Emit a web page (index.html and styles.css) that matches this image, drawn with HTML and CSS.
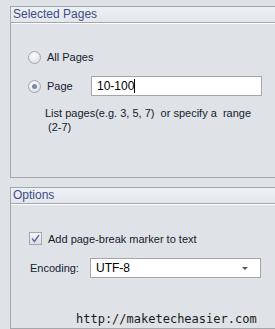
FILE: index.html
```html
<!DOCTYPE html>
<html lang="en">
<head>
    <meta charset="UTF-8">
    <title>Export options</title>
    <link rel="stylesheet" href="styles.css">
</head>
<body>
    <section class="panel pages-panel">
        <div class="panel-title">Selected Pages</div>
        <div class="panel-body">
            <div class="row all-row">
                <span class="radio"></span>
                <span class="label">All Pages</span>
            </div>
            <div class="row page-row">
                <span class="radio checked"></span>
                <span class="label page-label">Page</span>
                <div class="text-box">10-100<span class="caret"></span></div>
            </div>
            <p class="hint">List pages(e.g. 3, 5, 7)&nbsp; or specify a&nbsp; range<br>&nbsp;(2-7)</p>
        </div>
    </section>

    <section class="panel options-panel">
        <div class="panel-title">Options</div>
        <div class="panel-body">
            <div class="row check-row">
                <span class="checkbox">
                    <svg width="9" height="9" viewBox="0 0 9 9"><path d="M1 4.5 L3.5 7.5 L8 1" fill="none" stroke="#5f6fa0" stroke-width="1.4"/></svg>
                </span>
                <span class="label">Add page-break marker to text</span>
            </div>
            <div class="row enc-row">
                <span class="label enc-label">Encoding:</span>
                <div class="text-box select-box">UTF-8<span class="arrow"></span></div>
            </div>
        </div>
        <div class="site">http://maketecheasier.com</div>
    </section>
</body>
</html>
```

FILE: styles.css
```css
body {
    margin: 0;
    padding: 6px 0 0 10px;
    background-color: #dfe3e7;
    font-family: "Liberation Sans", Arial, sans-serif;
    font-size: 11px;
    color: #15202e;
    height: 323px;
    overflow: hidden;
}

.panel {
    border: 1px solid #a4a8ac;
    border-right: none;
}

.panel-title {
    height: 15px;
    line-height: 15px;
    padding-left: 2px;
    font-size: 12px;
    color: #3d4c86;
    background: linear-gradient(#eef1f4, #e3e7eb);
    border-bottom: 1px solid #a4a8ac;
    box-shadow: 0 1px 0 #fff;
}

.pages-panel .panel-body {
    height: 154px;
    padding: 27px 0 0 17px;
    box-sizing: border-box;
}

.row {
    display: flex;
    align-items: center;
}

.radio {
    width: 11px;
    height: 11px;
    border: 1px solid #a3a6aa;
    border-radius: 50%;
    background: radial-gradient(circle at 40% 35%, #ffffff, #d4d7db);
    margin-right: 6px;
    position: relative;
}

.radio.checked::after {
    content: "";
    position: absolute;
    left: 3px;
    top: 3px;
    width: 5px;
    height: 5px;
    border-radius: 50%;
    background: #7d8aa8;
}

.all-row {
    height: 14px;
}

.page-row {
    margin-top: 12px;
}

.page-label {
    width: 44px;
}

.text-box {
    width: 164px;
    height: 18px;
    line-height: 18px;
    border: 1px solid #a3a6aa;
    background: #fff;
    padding-left: 5px;
    font-size: 12px;
    color: #000;
    position: relative;
}

.caret {
    display: inline-block;
    width: 1px;
    height: 14px;
    background: #000;
    vertical-align: -3px;
}

.hint {
    margin: 10px 0 0 17px;
    line-height: 14px;
}

.options-panel {
    margin-top: 9px;
    height: 140px;
    position: relative;
}

.options-panel .panel-body {
    padding: 28px 0 0 18px;
}

.checkbox {
    width: 11px;
    height: 11px;
    border: 1px solid #a3a6aa;
    background: linear-gradient(#f5f6f8, #dcdfe3);
    margin-right: 6px;
    display: flex;
    align-items: center;
    justify-content: center;
}

.enc-row {
    margin-top: 13px;
    margin-left: 1px;
}

.enc-label {
    width: 60px;
}

.arrow {
    position: absolute;
    right: 12px;
    top: 8px;
    border-left: 3px solid transparent;
    border-right: 3px solid transparent;
    border-top: 3px solid #555;
}

.site {
    position: absolute;
    left: 65px;
    bottom: 2px;
    font-family: "DejaVu Sans Mono", monospace;
    font-size: 12px;
    color: #1a1a1a;
}
```
